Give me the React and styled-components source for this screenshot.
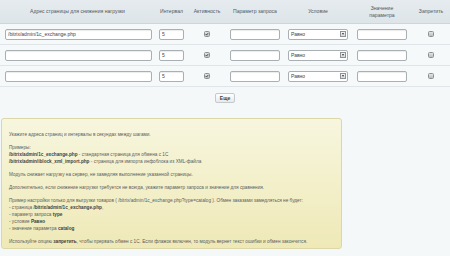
import React from "react";
import styled, { createGlobalStyle } from "styled-components";

const Global = createGlobalStyle`
  html, body { margin: 0; padding: 0; background: #f5f8f9; }
  body { font-family: "Liberation Sans", Arial, sans-serif; width: 450px; height: 256px; overflow: hidden; }
`;

const Page = styled.div`
  display: flex;
  flex-direction: column;
  width: 450px;
`;

const cols = "155px 33px 38px 58px 68px 60px 1fr";

const HeadRow = styled.div`
  display: grid;
  grid-template-columns: ${cols};
  height: 24px;
  background: linear-gradient(#e5ebee, #dee5e9);
  border-bottom: 1px solid #cdd6da;
  box-sizing: border-box;
`;

const HeadCell = styled.div`
  display: flex;
  align-items: center;
  justify-content: center;
  text-align: center;
  font-size: 5.1px;
  line-height: 7px;
  color: #50585c;
`;

const Row = styled.div`
  display: grid;
  grid-template-columns: ${cols};
  height: 21px;
  align-items: center;
  border-bottom: 1px solid #dfe5e8;
  background: #f6f9fa;
  box-sizing: border-box;
`;

const Cell = styled.div`
  display: flex;
  align-items: center;
  justify-content: ${(p) => (p.$left ? "flex-start" : "center")};
  padding-left: ${(p) => (p.$left ? "5px" : "0")};
  padding-right: ${(p) => (p.$left ? "3px" : "0")};
`;

const Input = styled.div`
  box-sizing: border-box;
  width: ${(p) => p.$w}px;
  height: 11px;
  background: #fff;
  border: 1px solid #a9b0b4;
  border-radius: 2px;
  box-shadow: inset 0 1px 1px rgba(0,0,0,0.08);
  font-size: 5px;
  line-height: 9px;
  padding-left: 2px;
  color: #444;
  white-space: nowrap;
  overflow: hidden;
`;

const SelectBox = styled.div`
  box-sizing: border-box;
  width: 60px;
  height: 11px;
  background: #fff;
  border: 1px solid #a9b0b4;
  border-radius: 2px;
  display: flex;
  align-items: center;
  justify-content: space-between;
  padding: 0 1px 0 2px;
  font-size: 5px;
  color: #444;
`;

const Arrow = styled.div`
  width: 6px;
  height: 6px;
  border: 1px solid #8c9397;
  background: linear-gradient(#f4f4f4, #d6d9db);
  box-sizing: border-box;
  display: flex;
  align-items: center;
  justify-content: center;
  &::after {
    content: "";
    border-left: 1.5px solid transparent;
    border-right: 1.5px solid transparent;
    border-top: 2px solid #333;
  }
`;

const Check = styled.div`
  width: 6px;
  height: 6px;
  box-sizing: border-box;
  border: 1px solid #8a9094;
  border-radius: 1.5px;
  background: linear-gradient(#e4e6e7, #b8bdc0);
  display: flex;
  align-items: center;
  justify-content: center;
`;

const ButtonRow = styled.div`
  display: flex;
  justify-content: center;
  padding-top: 6px;
  height: 31px;
  box-sizing: border-box;
`;

const Button = styled.div`
  box-sizing: border-box;
  width: 20px;
  height: 10px;
  border: 1px solid #c3c9cc;
  border-radius: 2px;
  background: linear-gradient(#ffffff, #e6eaec);
  font-size: 5px;
  font-weight: bold;
  color: #3c4346;
  display: flex;
  align-items: center;
  justify-content: center;
`;

const Note = styled.div`
  margin-left: 1px;
  width: 341px;
  height: 131px;
  box-sizing: border-box;
  border: 1px solid #dcd7a8;
  border-radius: 3px;
  background: linear-gradient(#f7f6de, #efe9b7);
  padding: 12px 0 0 7px;
  font-size: 4.7px;
  line-height: 7px;
  color: #5a5c5c;
`;

const Para = styled.p`
  margin: 0 0 ${(p) => p.$gap ?? 6}px 0;
  white-space: nowrap;
`;

const B = styled.b`
  color: #3d3f3f;
`;

const CheckMark = () => (
  <svg width="4" height="4" viewBox="0 0 4 4">
    <path d="M0.6 2 L1.6 3 L3.4 0.8" fill="none" stroke="#333" strokeWidth="0.8" />
  </svg>
);

const rows = ["/bitrix/admin/1c_exchange.php", "", ""];

export default function App() {
  return (
    <Page>
      <Global />
      <HeadRow>
        <HeadCell>Адрес страницы для снижения нагрузки</HeadCell>
        <HeadCell>Интервал</HeadCell>
        <HeadCell>Активность</HeadCell>
        <HeadCell>Параметр запроса</HeadCell>
        <HeadCell>Условие</HeadCell>
        <HeadCell>Значение<br />параметра</HeadCell>
        <HeadCell>Запретить</HeadCell>
      </HeadRow>
      {rows.map((r, i) => (
        <Row key={i}>
          <Cell $left><Input $w={147}>{r}</Input></Cell>
          <Cell><Input $w={25}>5</Input></Cell>
          <Cell><Check><CheckMark /></Check></Cell>
          <Cell><Input $w={50} /></Cell>
          <Cell><SelectBox>Равно<Arrow /></SelectBox></Cell>
          <Cell><Input $w={50} /></Cell>
          <Cell><Check /></Cell>
        </Row>
      ))}
      <ButtonRow><Button>Еще</Button></ButtonRow>
      <Note>
        <Para>Укажите адреса страниц и интервалы в секундах между шагами.</Para>
        <Para $gap={0}>Примеры:</Para>
        <Para $gap={0}><B>/bitrix/admin/1c_exchange.php</B> - стандартная страница для обмена с 1С</Para>
        <Para><B>/bitrix/admin/iblock_xml_import.php</B> - страница для импорта инфоблока из XML-файла</Para>
        <Para>Модуль снижает нагрузку на сервер, не замедляя выполнение указанной страницы.</Para>
        <Para>Дополнительно, если снижение нагрузки требуется не всегда, укажите параметр запроса и значение для сравнения.</Para>
        <Para $gap={0}>Пример настройки только для выгрузки товаров ( /bitrix/admin/1c_exchange.php?type=catalog ). Обмен заказами замедляться не будет:</Para>
        <Para $gap={0}>- страница <B>/bitrix/admin/1c_exchange.php</B>,</Para>
        <Para $gap={0}>- параметр запроса <B>type</B></Para>
        <Para $gap={0}>- условие <B>Равно</B></Para>
        <Para>- значение параметра <B>catalog</B></Para>
        <Para>Используйте опцию <B>запретить</B>, чтобы прервать обмен с 1С. Если флажок включен, то модуль вернет текст ошибки и обмен закончится.</Para>
      </Note>
    </Page>
  );
}
